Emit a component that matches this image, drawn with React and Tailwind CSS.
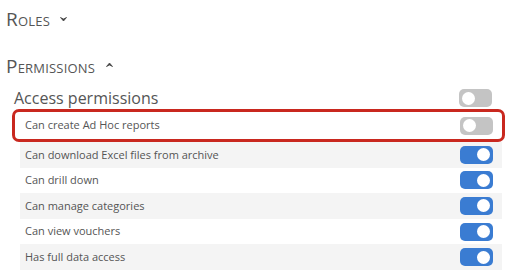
import React from 'react';

const permissions = [
  { label: 'Can download Excel files from archive', on: true },
  { label: 'Can drill down', on: true },
  { label: 'Can manage categories', on: true },
  { label: 'Can view vouchers', on: true },
  { label: 'Has full data access', on: true },
];

function Toggle({ on }) {
  return (
    <div
      className={`w-[33px] h-[18px] rounded-[5px] flex items-center px-[3px] shrink-0 ${
        on ? 'bg-[#3a7cd2] justify-end' : 'bg-[#c4c4c4] justify-start'
      }`}
    >
      <div className="w-[13px] h-[13px] rounded-full bg-white" />
    </div>
  );
}

function Caret({ up }) {
  return (
    <svg width="7" height="5" viewBox="0 0 7 5" className={up ? 'ml-[11px] -mt-[4px]' : 'ml-[10px] mt-[1px]'}>
      <polygon
        points={up ? '0.5,4.5 3.5,1 6.5,4.5 3.5,3' : '0.5,0.5 3.5,4 6.5,0.5 3.5,2'}
        fill="#444"
        stroke="#444"
        strokeWidth="0.8"
        strokeLinejoin="round"
      />
    </svg>
  );
}

export default function App() {
  return (
    <div className="w-[512px] h-[272px] overflow-hidden bg-white pl-[6px] text-[#555] font-['Open_Sans',sans-serif]">
      {/* Sección Roles */}
      <div className="mt-[8px] h-[22px] flex items-center">
        <span className="text-[19px] leading-[22px] tracking-[0.2px] [font-variant:small-caps] text-[#555]">Roles</span>
        <Caret />
      </div>

      {/* Sección Permisos */}
      <div className="mt-[25px] h-[22px] flex items-center">
        <span className="text-[19px] leading-[22px] tracking-[0.2px] [font-variant:small-caps] text-[#555]">Permissions</span>
        <Caret up />
      </div>

      <div className="mt-[10px] ml-[8px] w-[478px] h-[22px] flex items-center justify-between">
        <span className="text-[16px] leading-[22px] text-[#555]">Access permissions</span>
        <Toggle on={false} />
      </div>

      {/* Fila resaltada */}
      <div className="ml-[6px] w-[493px] h-[33px] border-[3px] border-[#c9281f] rounded-[7px] flex items-center justify-between pl-[10px] pr-[9px]">
        <span className="text-[11px] text-[#555]">Can create Ad Hoc reports</span>
        <Toggle on={false} />
      </div>

      <div className="ml-[14px] w-[482px]">
        {permissions.map((p, i) => (
          <div
            key={p.label}
            className={`h-[25.6px] flex items-center justify-between pl-[5px] pr-[9px] ${
              i % 2 === 0 ? 'bg-[#f4f4f4]' : 'bg-white'
            }`}
          >
            <span className="text-[11px] text-[#555]">{p.label}</span>
            <Toggle on={p.on} />
          </div>
        ))}
      </div>
    </div>
  );
}
